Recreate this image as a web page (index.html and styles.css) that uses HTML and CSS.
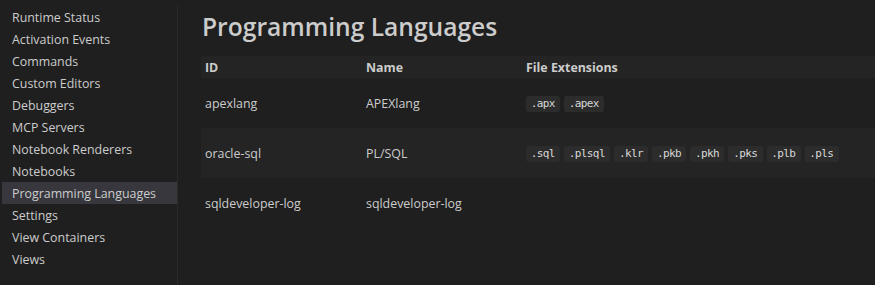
FILE: index.html
```html
<!DOCTYPE html>
<html>
<head>
<meta charset="utf-8">
<link rel="stylesheet" href="styles.css">
</head>
<body>
<div class="layout">
  <nav class="sidebar">
    <div class="nav-item">Runtime Status</div>
    <div class="nav-item">Activation Events</div>
    <div class="nav-item">Commands</div>
    <div class="nav-item">Custom Editors</div>
    <div class="nav-item">Debuggers</div>
    <div class="nav-item">MCP Servers</div>
    <div class="nav-item">Notebook Renderers</div>
    <div class="nav-item">Notebooks</div>
    <div class="nav-item selected">Programming Languages</div>
    <div class="nav-item">Settings</div>
    <div class="nav-item">View Containers</div>
    <div class="nav-item">Views</div>
  </nav>
  <main class="content">
    <h1 class="title">Programming Languages</h1>
    <table class="grid">
      <thead>
        <tr class="head-row">
          <th class="c-id">ID</th>
          <th class="c-name">Name</th>
          <th class="c-ext">File Extensions</th>
        </tr>
      </thead>
      <tbody>
        <tr class="row">
          <td>apexlang</td>
          <td>APEXlang</td>
          <td><code class="tag">.apx</code><code class="tag">.apex</code></td>
        </tr>
        <tr class="row alt">
          <td>oracle-sql</td>
          <td>PL/SQL</td>
          <td><code class="tag">.sql</code><code class="tag">.plsql</code><code class="tag">.klr</code><code class="tag">.pkb</code><code class="tag">.pkh</code><code class="tag">.pks</code><code class="tag">.plb</code><code class="tag">.pls</code></td>
        </tr>
        <tr class="row">
          <td>sqldeveloper-log</td>
          <td>sqldeveloper-log</td>
          <td></td>
        </tr>
      </tbody>
    </table>
  </main>
</div>
</body>
</html>
```

FILE: styles.css
```css
html, body {
  margin: 0;
  padding: 0;
  background: #1f1f1f;
  color: #cccccc;
  font-family: "Open Sans", "Noto Sans", sans-serif;
  font-size: 12.4px;
  overflow: hidden;
}

.layout {
  display: flex;
  height: 285px;
}

.sidebar {
  width: 178px;
  flex: none;
  padding-left: 2px;
  box-sizing: border-box;
  border-right: 1px solid #2b2b2b;
  margin-top: 6px;
}

.nav-item {
  height: 22px;
  box-sizing: border-box;
  padding-top: 2px;
  line-height: 20px;
  padding-left: 10px;
  white-space: nowrap;
}

.nav-item.selected {
  background: #37373d;
}

.content {
  flex: 1;
  padding-left: 23px;
  min-width: 0;
}

.title {
  margin: 0;
  padding-top: 11px;
  height: 56px;
  box-sizing: border-box;
  font-size: 24.6px;
  font-weight: 600;
  line-height: 32px;
  padding-left: 1px;
  color: #cccccc;
}

.grid {
  border-collapse: collapse;
  width: 100%;
  table-layout: fixed;
}

.grid th, .grid td {
  text-align: left;
  padding: 0 4px;
  vertical-align: middle;
  white-space: nowrap;
}

.head-row {
  background: #242424;
  height: 22px;
}

.head-row th {
  font-weight: 700;
}

.c-id { width: 153px; }
.c-name { width: 152px; }

.row {
  height: 50px;
}

.row.alt {
  background: #242424;
}

.tag {
  display: inline-block;
  font-family: "DejaVu Sans Mono", monospace;
  font-size: 11px;
  letter-spacing: -0.6px;
  line-height: 16px;
  height: 16px;
  padding: 0 5.3px 0 4.7px;
  margin-right: 4px;
  border-radius: 3px;
  background: #2c2c2c;
  color: #d8d8d8;
  vertical-align: middle;
}
```
